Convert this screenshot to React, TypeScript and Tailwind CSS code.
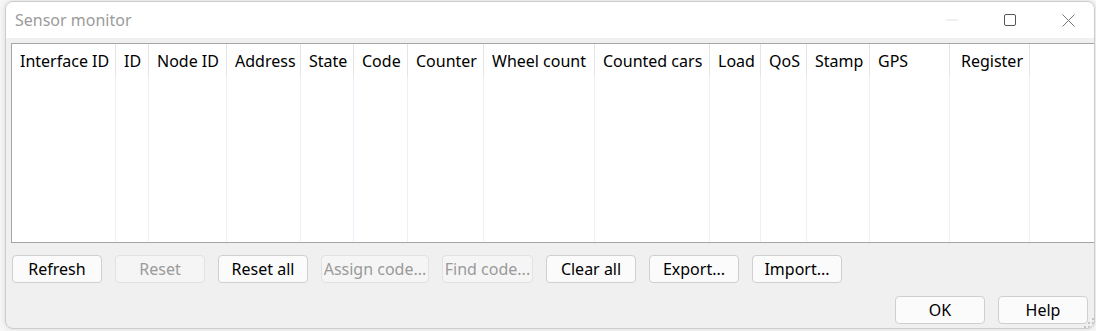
import React from "react";

const cols: { label: string; w: number; cls?: string }[] = [
  { label: "Interface ID", w: 104 },
  { label: "ID", w: 33 },
  { label: "Node ID", w: 78 },
  { label: "Address", w: 74 },
  { label: "State", w: 53 },
  { label: "Code", w: 54 },
  { label: "Counter", w: 76 },
  { label: "Wheel count", w: 111 },
  { label: "Counted cars", w: 115 },
  { label: "Load", w: 51 },
  { label: "QoS", w: 46 },
  { label: "Stamp", w: 63 },
  { label: "GPS", w: 80 },
  { label: "Register", w: 80, cls: "justify-end pr-[6px]" },
];

function Btn({
  label,
  disabled,
  width = "w-[90px]",
}: {
  label: string;
  disabled?: boolean;
  width?: string;
}) {
  return (
    <div
      className={`${width} h-[28px] shrink-0 flex items-center justify-center rounded-[4px] border whitespace-nowrap overflow-hidden ${
        disabled
          ? "border-[#e2e2e2] bg-[#f5f5f5] text-[#9a9a9a]"
          : "border-[#cfcfcf] bg-[#fbfbfb] text-black"
      }`}
    >
      {label}
    </div>
  );
}

export default function App() {
  return (
    <div
      className="w-[1096px] h-[331px] bg-[#f7f7f7] overflow-hidden pt-[1px] pl-[5px]"
      style={{ fontFamily: '"Noto Sans", "Open Sans", sans-serif' }}
    >
      <div className="relative w-[1090px] h-[328px] rounded-[8px] border border-[#cdcdcd] bg-[#f0f0f0] overflow-hidden flex flex-col shadow-[0_0_6px_rgba(0,0,0,0.12)] text-[15px]">
        {/* Title bar */}
        <div className="h-[36px] shrink-0 bg-white flex items-center pl-[9px]">
          <span className="text-[16px] text-[#9b9b9b] leading-none -mt-[1px]">Sensor monitor</span>
          <div className="ml-auto flex items-center h-full">
            <svg width="12" height="2" className="mr-[46px]" viewBox="0 0 12 2">
              <line x1="0" y1="1" x2="12" y2="1" stroke="#e3e3e3" strokeWidth="1" />
            </svg>
            <svg width="12" height="12" className="mr-[46px]" viewBox="0 0 12 12">
              <rect x="0.5" y="0.5" width="11" height="11" rx="1.5" fill="none" stroke="#555" strokeWidth="1" />
            </svg>
            <svg width="13" height="13" className="mr-[19px]" viewBox="0 0 13 13">
              <path d="M0.5 0.5 L12.5 12.5 M12.5 0.5 L0.5 12.5" stroke="#777" strokeWidth="1" />
            </svg>
          </div>
        </div>

        {/* Body */}
        <div className="flex-1 flex flex-col pl-[5px] pt-[5px]">
          {/* Table */}
          <div className="h-[200px] w-[1084px] border border-[#a5a5a5] bg-white flex">
            {cols.map((c) => (
              <div
                key={c.label}
                className="h-full flex flex-col shrink-0"
                style={{ width: c.w }}
              >
                <div
                  className={`h-[33px] flex items-center pl-[8px] border-r border-[#e5e5e5] whitespace-nowrap text-black text-[16px] ${c.cls ?? ""}`}
                >
                  {c.label}
                </div>
                <div className="flex-1 border-r border-[#eaf1fb]" />
              </div>
            ))}
            <div className="flex-1" />
          </div>

          {/* Action buttons */}
          <div className="mt-[12px] flex gap-[13px] pl-[1px] text-[16px]">
            <Btn label="Refresh" />
            <Btn label="Reset" disabled />
            <Btn label="Reset all" />
            <Btn label="Assign code..." disabled width="w-[108px]" />
            <Btn label="Find code..." disabled width="w-[91px]" />
            <Btn label="Clear all" />
            <Btn label="Export..." />
            <Btn label="Import..." />
          </div>

          {/* OK / Help */}
          <div className="mt-[13px] flex justify-end gap-[13px] pr-[6px] text-[16px]">
            <Btn label="OK" />
            <Btn label="Help" />
          </div>
        </div>

        {/* Resize grip */}
        <svg
          className="absolute right-[0px] bottom-[0px]"
          width="10"
          height="10"
          viewBox="0 0 10 10"
        >
          <rect x="8" y="0" width="2" height="2" fill="#c4c4c4" />
          <rect x="4" y="4" width="2" height="2" fill="#c4c4c4" />
          <rect x="8" y="4" width="2" height="2" fill="#c4c4c4" />
          <rect x="0" y="8" width="2" height="2" fill="#c4c4c4" />
          <rect x="4" y="8" width="2" height="2" fill="#c4c4c4" />
          <rect x="8" y="8" width="2" height="2" fill="#c4c4c4" />
        </svg>
      </div>
    </div>
  );
}
